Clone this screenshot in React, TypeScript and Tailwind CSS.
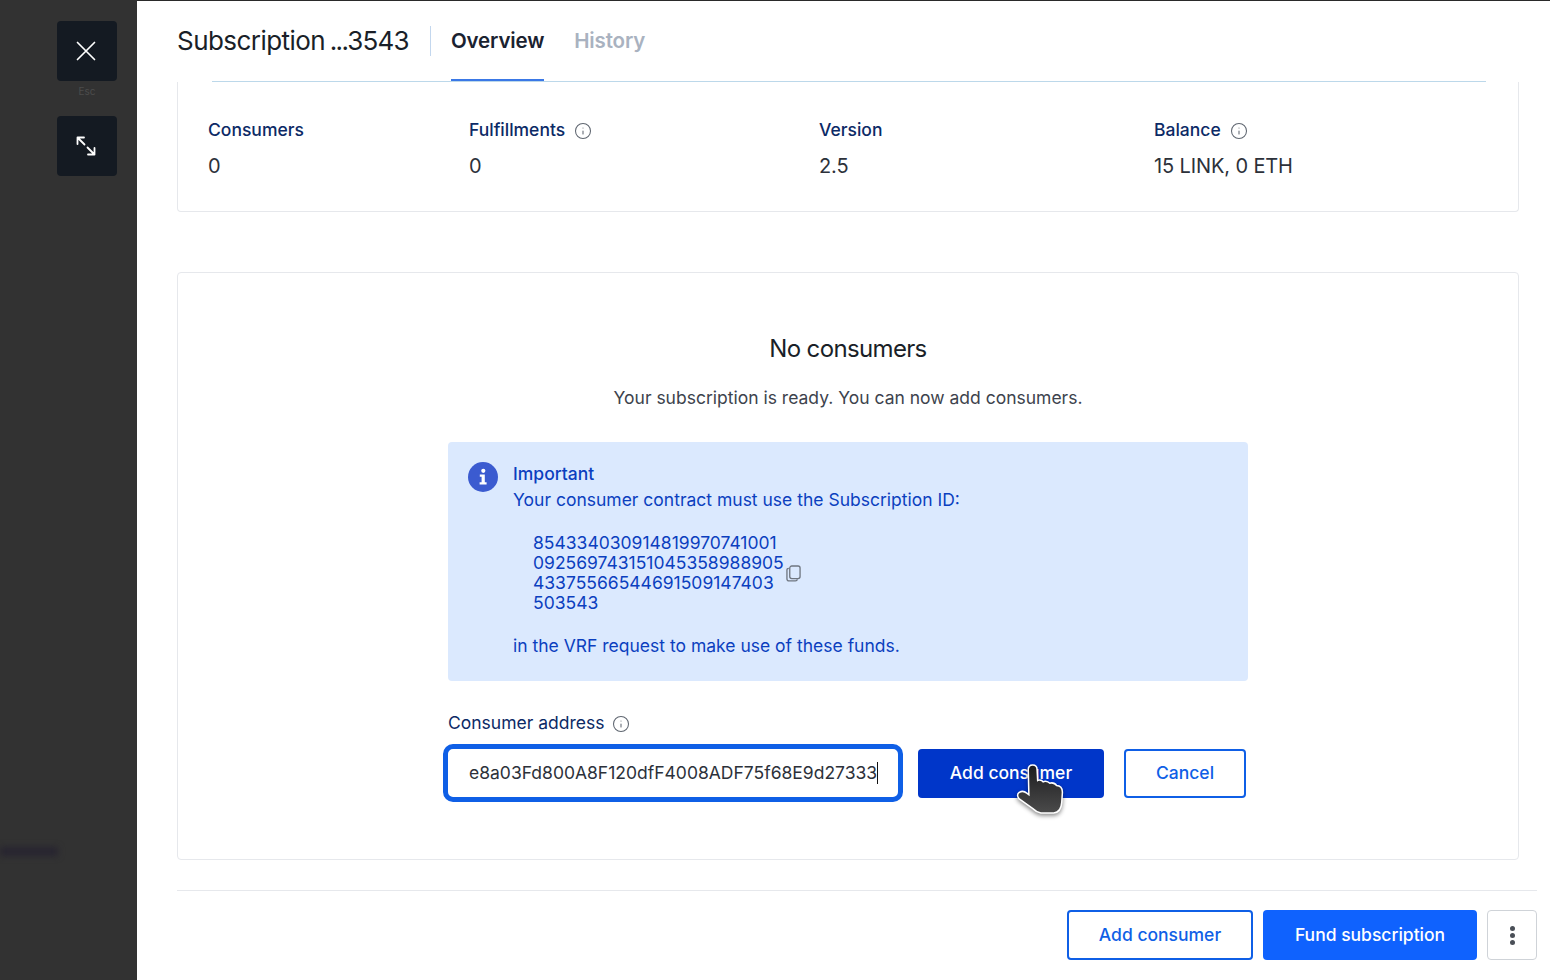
import { Info } from "lucide-react"

const stats = [
    { label: "Consumers", value: "0", info: false },
    { label: "Fulfillments", value: "0", info: true },
    { label: "Version", value: "2.5", info: false },
    { label: "Balance", value: "15 LINK, 0 ETH", info: true },
]

const subscriptionId = [
    "854334030914819970741001",
    "092569743151045358988905",
    "43375566544691509147403",
    "503543",
]

const HandCursor = () => (
    <svg
        viewBox="0 0 240 225"
        className="absolute left-[81px] top-0 w-[80px] h-[75px] drop-shadow-[0_2px_2px_rgba(0,0,0,0.45)]"
    >
        <defs>
            <linearGradient id="hand" x1="0" y1="0" x2="0" y2="1">
                <stop offset="0" stopColor="#1d1d1f" />
                <stop offset="1" stopColor="#4a4a4a" />
            </linearGradient>
        </defs>
        <path
            d="M90 62 Q90 50 101 50 Q112 50 112 62 L114 98 Q124 92 132 101 Q142 95 152 105 Q164 101 172 112 Q188 112 188 130 L186 160 Q184 188 164 190 L126 190 Q114 188 104 178 L62 148 Q54 138 62 132 Q72 126 82 134 L92 142 Z"
            fill="url(#hand)"
            stroke="#fff"
            strokeWidth="9"
            strokeLinejoin="round"
            paintOrder="stroke"
        />
    </svg>
)

const CopyIcon = () => (
    <svg viewBox="0 0 16 18" className="w-[15px] h-[17px] text-[#6f7680]" fill="none" stroke="currentColor" strokeWidth="1.4">
        <path d="M3 3.5 Q1 3.5 1 5.5 V14.5 Q1 16.8 3.2 16.8 H10 Q12 16.8 12 15" />
        <rect x="4" y="1" width="11" height="13.5" rx="2.2" />
    </svg>
)

const InfoBadge = () => (
    <svg viewBox="0 0 30 30" className="w-[30px] h-[30px] shrink-0">
        <circle cx="15" cy="15" r="15" fill="#3b5bd0" />
        <circle cx="15.3" cy="8.8" r="2.1" fill="#fff" />
        <path d="M11.8 12.6 H16.8 V20.2 H18.6 V22.4 H11.6 V20.2 H13.6 V14.8 H11.8 Z" fill="#fff" />
    </svg>
)

export default function App() {
    return (
        <div className="w-[1550px] h-[980px] flex overflow-hidden bg-[#323232] font-['Inter',sans-serif]">
            <aside className="relative w-[137px] shrink-0 bg-[#323232] flex flex-col items-end pr-[20px] pt-[21px]">
                <button className="w-[60px] h-[60px] rounded bg-[#141a22] flex items-center justify-center">
                    <svg viewBox="0 0 20 20" className="w-[20px] h-[20px] -ml-[2px]" stroke="#fff" strokeWidth="1.7" strokeLinecap="round">
                        <path d="M1.5 1.5 L18.5 18.5 M18.5 1.5 L1.5 18.5" />
                    </svg>
                </button>
                <span className="w-[60px] h-[20px] leading-[20px] text-center text-[10px] text-[#4c4c4c]">Esc</span>
                <button className="mt-[15px] w-[60px] h-[60px] rounded bg-[#141a22] flex items-center justify-center">
                    <svg viewBox="0 0 20 20" className="w-[20px] h-[20px] -ml-[2px]" fill="none" stroke="#fff" strokeWidth="1.8" strokeLinecap="round" strokeLinejoin="round">
                        <path d="M1.5 8 V1.5 H8 M1.5 1.5 L8.5 8.5 M18.5 12 V18.5 H12 M18.5 18.5 L11.5 11.5" />
                    </svg>
                </button>
                <div className="absolute left-0 top-[847px] w-[58px] h-[9px] bg-[#272430] blur-[3px]" />
            </aside>

            <main className="flex-1 bg-white border-t border-[#2a2a2a] flex flex-col">
                <header className="relative h-[81px] shrink-0 flex items-start pl-[40px] pt-[22px]">
                    <h1 className="w-[253px] text-[26px] leading-[36px] text-[#1a1f28] tracking-[-0.8px] [word-spacing:-2px]">
                        <span className="tracking-[-0.55px]">Subscription</span> <span className="tracking-[-1.6px]">...</span>3543
                    </h1>
                    <div className="w-px h-[30px] mt-[3px] bg-[#c3d7ee]" />
                    <nav className="flex gap-[30px] pl-[20px]">
                        <div className="h-[59px] pt-[5px] border-b-[3px] border-[#3a78e6] text-[20.5px] leading-[26px] font-semibold text-[#1a2230] tracking-[-0.15px]">Overview</div>
                        <div className="pt-[5px] text-[20.5px] leading-[26px] font-semibold text-[#a9b2c0] tracking-[-0.15px]">History</div>
                    </nav>
                    <div className="absolute left-[75px] right-[64px] bottom-0 h-px bg-[#bcd8ea]" />
                </header>

                <div className="flex-1 pl-[40px] flex flex-col">
                    <section className="w-[1342px] h-[130px] border border-t-0 border-[#e6e8ec] rounded-b pl-[30px] pt-[36px] grid grid-cols-[261px_350px_335px_1fr]">
                        {stats.map((stat) => (
                            <div key={stat.label}>
                                <div className="flex items-center gap-[9px] h-[24px] text-[17.5px] font-medium text-[#0c2a66]">
                                    {stat.label}
                                    {stat.info && <Info size={18} strokeWidth={1.4} className="text-[#5f6670] mt-[2px]" />}
                                </div>
                                <div className="mt-[12px] text-[20px] leading-[24px] text-[#2c313a] tracking-[-0.12px]">{stat.value}</div>
                            </div>
                        ))}
                    </section>

                    <section className="mt-[60px] w-[1342px] h-[588px] border border-[#e6e8ec] rounded flex flex-col items-center pt-[59px]">
                        <h2 className="text-[24px] leading-[34px] text-[#1a1f28] tracking-[-0.65px]">No consumers</h2>
                        <p className="mt-[18px] text-[17.5px] leading-[28px] text-[#3d434d]">Your subscription is ready. You can now add consumers.</p>

                        <div className="mt-[30px] w-[800px] h-[239px] rounded bg-[#dbe9fe] flex gap-[15px] pl-[20px] pt-[20px] text-[17.5px] text-[#0b3fbf]">
                            <InfoBadge />
                            <div>
                                <div className="leading-[24px] font-medium">Important</div>
                                <div className="mt-[1px] leading-[26px]">Your consumer contract must use the Subscription ID:</div>
                                <div className="mt-[20px] pl-[20px] flex items-center gap-[3px]">
                                    <div className="leading-[20px] w-[250px]">
                                        {subscriptionId.map((line) => (
                                            <div key={line}>{line}</div>
                                        ))}
                                    </div>
                                    <CopyIcon />
                                </div>
                                <div className="mt-[20px] leading-[26px]">in the VRF request to make use of these funds.</div>
                            </div>
                        </div>

                        <div className="w-[800px] mt-[30px]">
                            <div className="flex items-center gap-[8px] h-[24px] text-[17.5px] text-[#0c2a66]">
                                Consumer address
                                <Info size={18} strokeWidth={1.4} className="text-[#5f6670] mt-[1px]" />
                            </div>
                            <div className="mt-[9px] flex items-center -ml-[5px]">
                                <div className="w-[460px] h-[58px] rounded-[10px] border-[5px] border-[#0f5fe6] bg-white flex items-center pl-[21px] text-[17.5px] text-[#2c313a]">
                                    <span>e8a03Fd800A8F120dfF4008ADF75f68E9d27333</span>
                                    <span className="w-px h-[22px] bg-[#111]" />
                                </div>
                                <div className="relative ml-[15px]">
                                    <button className="w-[186px] h-[49px] rounded bg-[#0036c9] text-[17.5px] font-medium text-white">Add consumer</button>
                                    <HandCursor />
                                </div>
                                <button className="ml-[20px] w-[122px] h-[49px] rounded border-2 border-[#0f5fe6] text-[17.5px] font-medium text-[#0f5fe6]">Cancel</button>
                            </div>
                        </div>
                    </section>

                    <footer className="mt-[30px] w-[1360px] border-t border-[#e6e8ec] pt-[19px] flex justify-end gap-[10px]">
                        <button className="w-[186px] h-[50px] rounded border-2 border-[#0f5fe6] text-[17.5px] font-medium text-[#0f5fe6]">Add consumer</button>
                        <button className="w-[214px] h-[50px] rounded bg-[#0f62fe] text-[17.5px] font-medium text-white">Fund subscription</button>
                        <button className="w-[50px] h-[50px] rounded border border-[#cfd3d8] flex flex-col items-center justify-center gap-[2px]">
                            <span className="w-[5px] h-[5px] rounded-full bg-[#4a4f57]" />
                            <span className="w-[5px] h-[5px] rounded-full bg-[#4a4f57]" />
                            <span className="w-[5px] h-[5px] rounded-full bg-[#4a4f57]" />
                        </button>
                    </footer>
                </div>
            </main>
        </div>
    )
}
